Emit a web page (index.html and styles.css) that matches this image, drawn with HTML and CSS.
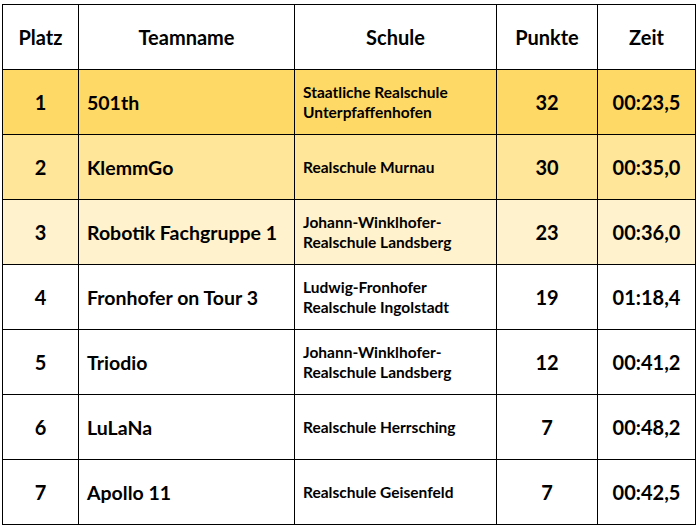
FILE: index.html
```html
<!DOCTYPE html>
<html lang="de">
<head>
<meta charset="utf-8">
<title>Ergebnisse</title>
<link rel="stylesheet" href="styles.css">
</head>
<body>
<table class="results">
  <colgroup>
    <col class="c-platz">
    <col class="c-team">
    <col class="c-schule">
    <col class="c-punkte">
    <col class="c-zeit">
  </colgroup>
  <thead>
    <tr class="head">
      <th>Platz</th>
      <th>Teamname</th>
      <th>Schule</th>
      <th>Punkte</th>
      <th>Zeit</th>
    </tr>
  </thead>
  <tbody>
    <tr class="gold">
      <td class="num">1</td>
      <td class="team">501th</td>
      <td class="school">Staatliche Realschule<br>Unterpfaffenhofen</td>
      <td class="num">32</td>
      <td class="num">00:23,5</td>
    </tr>
    <tr class="gold2">
      <td class="num">2</td>
      <td class="team">KlemmGo</td>
      <td class="school">Realschule Murnau</td>
      <td class="num">30</td>
      <td class="num">00:35,0</td>
    </tr>
    <tr class="gold3">
      <td class="num">3</td>
      <td class="team">Robotik Fachgruppe 1</td>
      <td class="school">Johann-Winklhofer-<br>Realschule Landsberg</td>
      <td class="num">23</td>
      <td class="num">00:36,0</td>
    </tr>
    <tr>
      <td class="num">4</td>
      <td class="team">Fronhofer on Tour 3</td>
      <td class="school">Ludwig-Fronhofer<br>Realschule Ingolstadt</td>
      <td class="num">19</td>
      <td class="num">01:18,4</td>
    </tr>
    <tr>
      <td class="num">5</td>
      <td class="team">Triodio</td>
      <td class="school">Johann-Winklhofer-<br>Realschule Landsberg</td>
      <td class="num">12</td>
      <td class="num">00:41,2</td>
    </tr>
    <tr>
      <td class="num">6</td>
      <td class="team">LuLaNa</td>
      <td class="school">Realschule Herrsching</td>
      <td class="num">7</td>
      <td class="num">00:48,2</td>
    </tr>
    <tr>
      <td class="num">7</td>
      <td class="team">Apollo 11</td>
      <td class="school">Realschule Geisenfeld</td>
      <td class="num">7</td>
      <td class="num">00:42,5</td>
    </tr>
  </tbody>
</table>
</body>
</html>
```

FILE: styles.css
```css
html, body {
  margin: 0;
  padding: 0;
  background: #ffffff;
}

body {
  padding: 4px 0 0 2px;
  font-family: "Lato", "Open Sans", "Liberation Sans", sans-serif;
  font-weight: 700;
  color: #000;
}

.results {
  border-collapse: collapse;
  table-layout: fixed;
  width: 693px;
}

.c-platz { width: 76px; }
.c-team { width: 216px; }
.c-schule { width: 202px; }
.c-punkte { width: 101px; }
.c-zeit { width: 98px; }

.results th,
.results td {
  border: 1px solid #000;
  height: 64px;
  padding: 0;
  vertical-align: middle;
  font-size: 20px;
  font-weight: 700;
}

.results th {
  text-align: center;
}

.num {
  text-align: center;
}

.team {
  text-align: left;
  padding-left: 8px !important;
  font-size: 19.5px !important;
}

.school {
  text-align: left;
  padding-left: 8px !important;
  font-size: 15.5px !important;
  line-height: 20px;
}

.gold { background: #ffd966; }
.gold2 { background: #ffe699; }
.gold3 { background: #fff2cc; }
```
